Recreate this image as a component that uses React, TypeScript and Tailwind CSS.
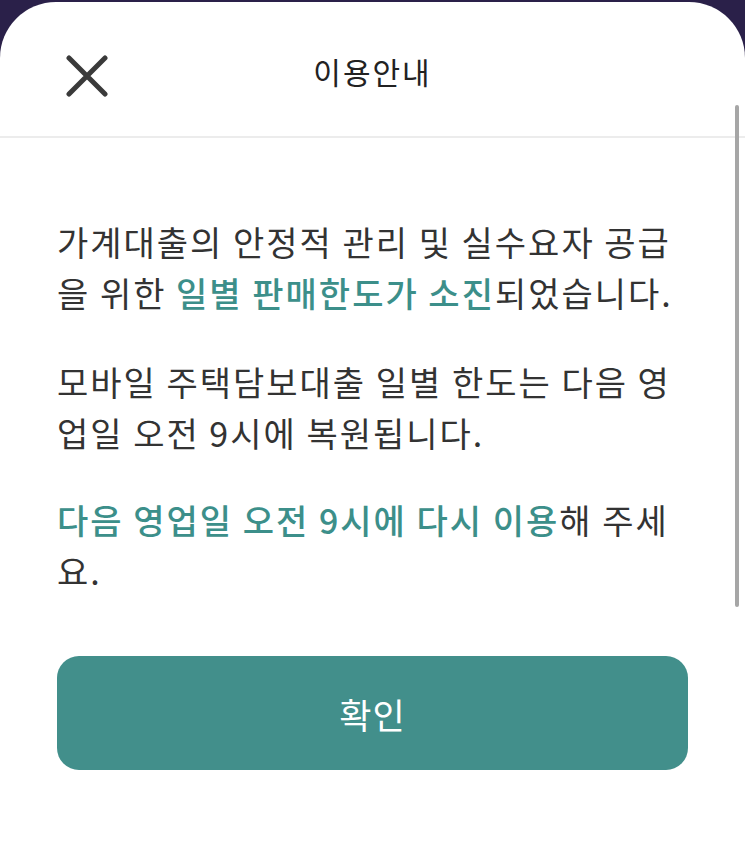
export default function App() {
  return (
    <div className="min-h-screen w-full bg-[#2a2049] pt-[2px] font-['Noto_Sans_CJK_KR','Noto_Sans',sans-serif]">
      <div className="relative flex min-h-[850px] flex-col rounded-t-[56px] bg-white">
        <header className="relative flex h-[136px] items-center justify-center border-b-2 border-[#ececec]">
          <button className="absolute left-[66px] top-[53px] text-[#3a3a3a]" aria-label="닫기">
            <svg width="42" height="42" viewBox="0 0 42 42" fill="none" stroke="currentColor" strokeWidth="5" strokeLinecap="round">
              <path d="M3 3 L39 39 M39 3 L3 39" />
            </svg>
          </button>
          <h1 className="mt-[4px] text-[30px] font-normal tracking-[2px] text-[#222]">이용안내</h1>
        </header>

        <main className="flex flex-col px-[57px] pt-[78px] text-[34px] leading-[51px] tracking-[2px] text-[#333]">
          <p>
            가계대출의 안정적 관리 및 실수요자 공급을 위한{" "}
            <span className="font-medium text-[#3c8f8a]">일별 판매한도가 소진</span>되었습니다.
          </p>
          <p className="mt-[38px]">모바일 주택담보대출 일별 한도는 다음 영업일 오전 9시에 복원됩니다.</p>
          <p className="mt-[36px]">
            <span className="font-medium text-[#3c8f8a]">다음 영업일 오전 9시에 다시 이용</span>해 주세요.
          </p>

          <button className="mt-[60px] flex h-[114px] w-full items-center justify-center rounded-[22px] bg-[#428f8b] text-[35px] font-normal tracking-[1px] text-white">
            확인
          </button>
        </main>

        <div className="absolute right-[6px] top-[103px] h-[502px] w-[4px] rounded-full bg-[#a6a6a6]" />
      </div>
    </div>
  );
}
